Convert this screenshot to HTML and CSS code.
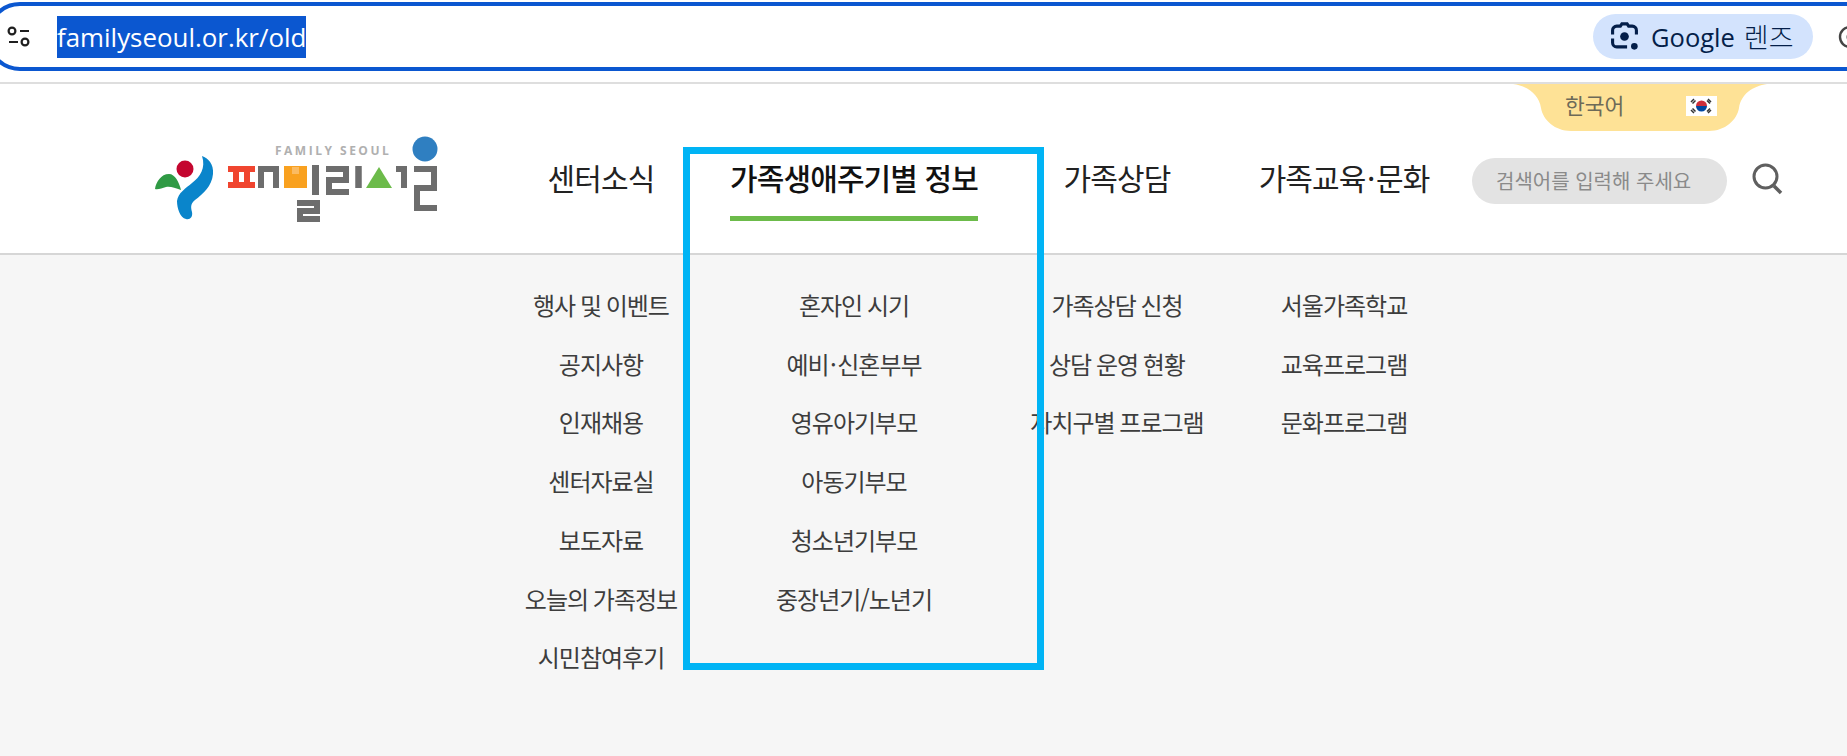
FILE: index.html
```html
<!DOCTYPE html>
<html lang="ko">
<head>
<meta charset="utf-8">
<title>패밀리서울</title>
<link rel="stylesheet" href="styles.css">
</head>
<body>
<div class="chrome">
  <div class="omnibox">
    <svg class="tune" viewBox="0 0 24 22" width="24" height="22"><circle cx="5" cy="5" r="3.4" fill="none" stroke="#1f1f1f" stroke-width="2.2"/><path d="M13 5h9M2 16h9" stroke="#1f1f1f" stroke-width="2.2" fill="none"/><circle cx="18" cy="16" r="3.4" fill="none" stroke="#1f1f1f" stroke-width="2.2"/></svg>
    <span class="url">familyseoul.or.kr/old</span>
    <span class="lens">
      <svg viewBox="0 0 28 28" width="29" height="29"><path d="M2.500 12V8a4 4 0 0 1 4-4h3.500l1.500-2.200h5L18 4h3.500a4 4 0 0 1 4 4v4M2.500 16v4a4 4 0 0 0 4 4h10" fill="none" stroke="#041e49" stroke-width="3"/><circle cx="14" cy="14" r="4.200" fill="#041e49"/><circle cx="23.500" cy="23.500" r="3.200" fill="#041e49"/></svg>
      <span class="lens-text">Google</span><span class="lens-ko">렌즈</span>
    </span>
    <svg class="cut" viewBox="0 0 20 28" width="20" height="28"><circle cx="14" cy="14" r="10" fill="none" stroke="#444" stroke-width="2.400"/><circle cx="14" cy="14" r="3.500" fill="#444"/></svg>
  </div>
</div>
<header class="site-head">
  <a class="logo" href="#">
    <svg viewBox="150 130 295 95" width="295" height="95">
      <path d="M155 189C156 182 161 174 169 174C175 174 179 182 181 190C175 188 170 186 166 187C162 188 158 190 155 189Z" fill="#2f9a44"/>
      <circle cx="185" cy="169" r="8.500" fill="#c4062f"/>
      <path d="M202 156C208 158 214 164 213 174C212 186 203 194 195 200C190 204 191 208 192 212C193 217 190 220 186 219C180 218 177 208 177 201C178 193 186 188 192 183C200 177 206 168 202 156Z" fill="#0a85cb"/>
      <path d="M228 169h27M228 185h27M236 169v16M247 169v16" stroke="#f0452f" stroke-width="6" fill="none"/>
      <path d="M261 188v-19h15v19" stroke="#6d6d6d" stroke-width="6" fill="none"/>
      <rect x="284" y="166" width="23" height="22" fill="#f9a11f"/>
      <rect x="292" y="167" width="7" height="7" fill="#fbbb62"/>
      <path d="M315.500 165v30" stroke="#6d6d6d" stroke-width="7" fill="none"/>
      <path d="M297 203H317V211H300V219H320M326 169H346V180H329V192H349" stroke="#6d6d6d" stroke-width="6" fill="none"/>
      <path d="M358.500 166v22" stroke="#6d6d6d" stroke-width="6.500" fill="none"/>
      <path d="M379 167l13 21h-26z" fill="#6cbb4a"/>
      <path d="M396 169h8v19" stroke="#6d6d6d" stroke-width="6" fill="none"/>
      <path d="M414 169H434V188H417V208H437" stroke="#6d6d6d" stroke-width="6" fill="none"/>
      <circle cx="425" cy="149" r="12.500" fill="#2f7fc1"/>
      <text class="logo-en" x="275" y="155">FAMILY SEOUL</text>
    </svg>
  </a>
  <nav class="gnb cols">
    <a class="gnb-item" href="#"><span>센터소식</span></a>
    <a class="gnb-item on" href="#"><span>가족생애주기별 정보</span></a>
    <a class="gnb-item" href="#"><span>가족상담</span></a>
    <a class="gnb-item" href="#"><span>가족교육<i class="mid">·</i>문화</span></a>
  </nav>
  <div class="search">검색어를 입력해 주세요</div>
  <svg class="search-icon" viewBox="0 0 32 32" width="32" height="32"><circle cx="13.500" cy="13.500" r="11.500" fill="none" stroke="#5f5f5f" stroke-width="3"/><path d="M22 23l7 7" stroke="#5f5f5f" stroke-width="3.500" fill="none"/></svg>
  <div class="lang">
    <svg class="lang-bg" viewBox="0 0 254 47" width="254" height="47"><path d="M0 0H254C240 2 228 10 226 24C224 36 212 47 196 47H58C42 47 30 36 28 24C26 10 14 2 0 0Z" fill="#fee296"/></svg>
    <span class="lang-text">한국어</span>
    <svg class="flag" viewBox="0 0 31 20" width="31" height="20"><rect width="31" height="20" fill="#fff"/><path d="M10 10a5.500 5.500 0 0 1 11 0z" fill="#cd2e3a"/><path d="M10 10a5.500 5.500 0 0 0 11 0z" fill="#0047a0"/><path d="M5 6l3-3M6.500 7.500l3-3M22 3l3 3M21 4.500l3 3M5 14l3 3M6.500 12.500l3 3M22 17l3-3M21 15.500l3-3" stroke="#333" stroke-width="1.500"/></svg>
  </div>
</header>
<section class="submenu cols">
  <ul class="sub">
    <li>행사 및 이벤트</li><li>공지사항</li><li>인재채용</li><li>센터자료실</li><li>보도자료</li><li>오늘의 가족정보</li><li>시민참여후기</li>
  </ul>
  <ul class="sub">
    <li>혼자인 시기</li><li>예비<i class="mid">·</i>신혼부부</li><li>영유아기부모</li><li>아동기부모</li><li>청소년기부모</li><li>중장년기/노년기</li>
  </ul>
  <ul class="sub">
    <li>가족상담 신청</li><li>상담 운영 현황</li><li>자치구별 프로그램</li>
  </ul>
  <ul class="sub">
    <li>서울가족학교</li><li>교육프로그램</li><li>문화프로그램</li>
  </ul>
</section>
<div class="callout"></div>
</body>
</html>
```
FILE: styles.css
```css
* { box-sizing: border-box; }
html, body { margin: 0; padding: 0; height: 100%; overflow: hidden; }
body {
  background: #f6f6f6;
  font-family: "Noto Sans CJK KR", "Noto Sans", sans-serif;
  display: flex;
  flex-direction: column;
  position: relative;
}
a { color: inherit; text-decoration: none; }
ul { list-style: none; margin: 0; padding: 0; }
.mid { font-style: normal; margin: 0 1.500px; }

.chrome {
  height: 84px;
  flex: none;
  background: #fff;
  padding-top: 2px;
  border-bottom: 2px solid #dedede;
}
.omnibox {
  height: 69px;
  margin-left: -14px;
  margin-right: -40px;
  border: 4px solid #0b57d0;
  border-radius: 34px;
  display: flex;
  align-items: center;
  padding-left: 17px;
  background: #fff;
}
.tune { flex: none; }
.url {
  margin-left: 26px;
  background: #0b57d0;
  color: #fff;
  font-family: "Open Sans", sans-serif;
  font-size: 25.900px;
  line-height: 42px;
  height: 42px;
}
.lens {
  margin-left: auto;
  width: 220px;
  height: 45px;
  background: #d3e3fd;
  border-radius: 23px;
  display: flex;
  align-items: center;
  padding-left: 17px;
  color: #041e49;
  flex: none;
}
.lens-text {
  font-family: "Open Sans", sans-serif;
  font-size: 25.500px;
  margin-left: 12px;
}
.lens-ko { font-size: 27px; margin-left: 9px; font-weight: 300; }
.cut { margin-left: 23px; margin-right: 27px; flex: none; }

.site-head {
  height: 171px;
  flex: none;
  background: #fff;
  border-bottom: 2px solid #d6d6d6;
  display: flex;
  align-items: flex-start;
  padding-left: 150px;
  position: relative;
}
.logo { display: block; margin-top: 46px; flex: none; height: 95px; }
.logo-en {
  font-family: "Open Sans", sans-serif;
  font-size: 12px;
  font-weight: 700;
  letter-spacing: 2.500px;
  fill: #b0b0b0;
}
.cols {
  display: grid;
  grid-template-columns: 242px 264px 262px 192px;
  width: 960px;
}
.gnb { margin-left: 35px; flex: none; }
.gnb-item {
  display: flex;
  justify-content: center;
  font-size: 30px;
  letter-spacing: -0.9px;
  color: #222;
  line-height: 44px;
  padding-top: 71px;
}
.gnb-item span { display: block; height: 64px; white-space: nowrap; }
.gnb-item.on { color: #111; font-weight: 500; }
.gnb-item.on span { border-bottom: 5px solid #6cbb4a; height: 66px; }
.search {
  margin-left: 32px;
  margin-top: 74px;
  width: 255px;
  height: 46px;
  border-radius: 23px;
  background: #e3e3e3;
  color: #8a8a8a;
  font-size: 20px;
  line-height: 45px;
  padding-left: 24px;
  white-space: nowrap;
  flex: none;
}
.search-icon { margin-left: 25px; margin-top: 79px; flex: none; }
.lang {
  position: absolute;
  left: 1513px;
  top: 0;
  width: 254px;
  height: 47px;
}
.lang-bg { position: absolute; left: 0; top: 0; }
.lang-text {
  position: absolute;
  left: 52px;
  top: 7px;
  font-size: 21.500px;
  line-height: 28px;
  color: #6d6a58;
}
.flag { position: absolute; left: 173px; top: 12px; }

.submenu {
  margin-left: 480px;
  padding-top: 21px;
  flex: 1;
}
.sub li {
  text-align: center;
  font-size: 24px;
  letter-spacing: -1px;
  word-spacing: -1px;
  line-height: 58.700px;
  color: #3d3d3d;
  white-space: nowrap;
}
.callout {
  position: absolute;
  left: 683px;
  top: 147px;
  width: 361px;
  height: 523px;
  border: 7px solid #00b4f5;
  pointer-events: none;
}
```
